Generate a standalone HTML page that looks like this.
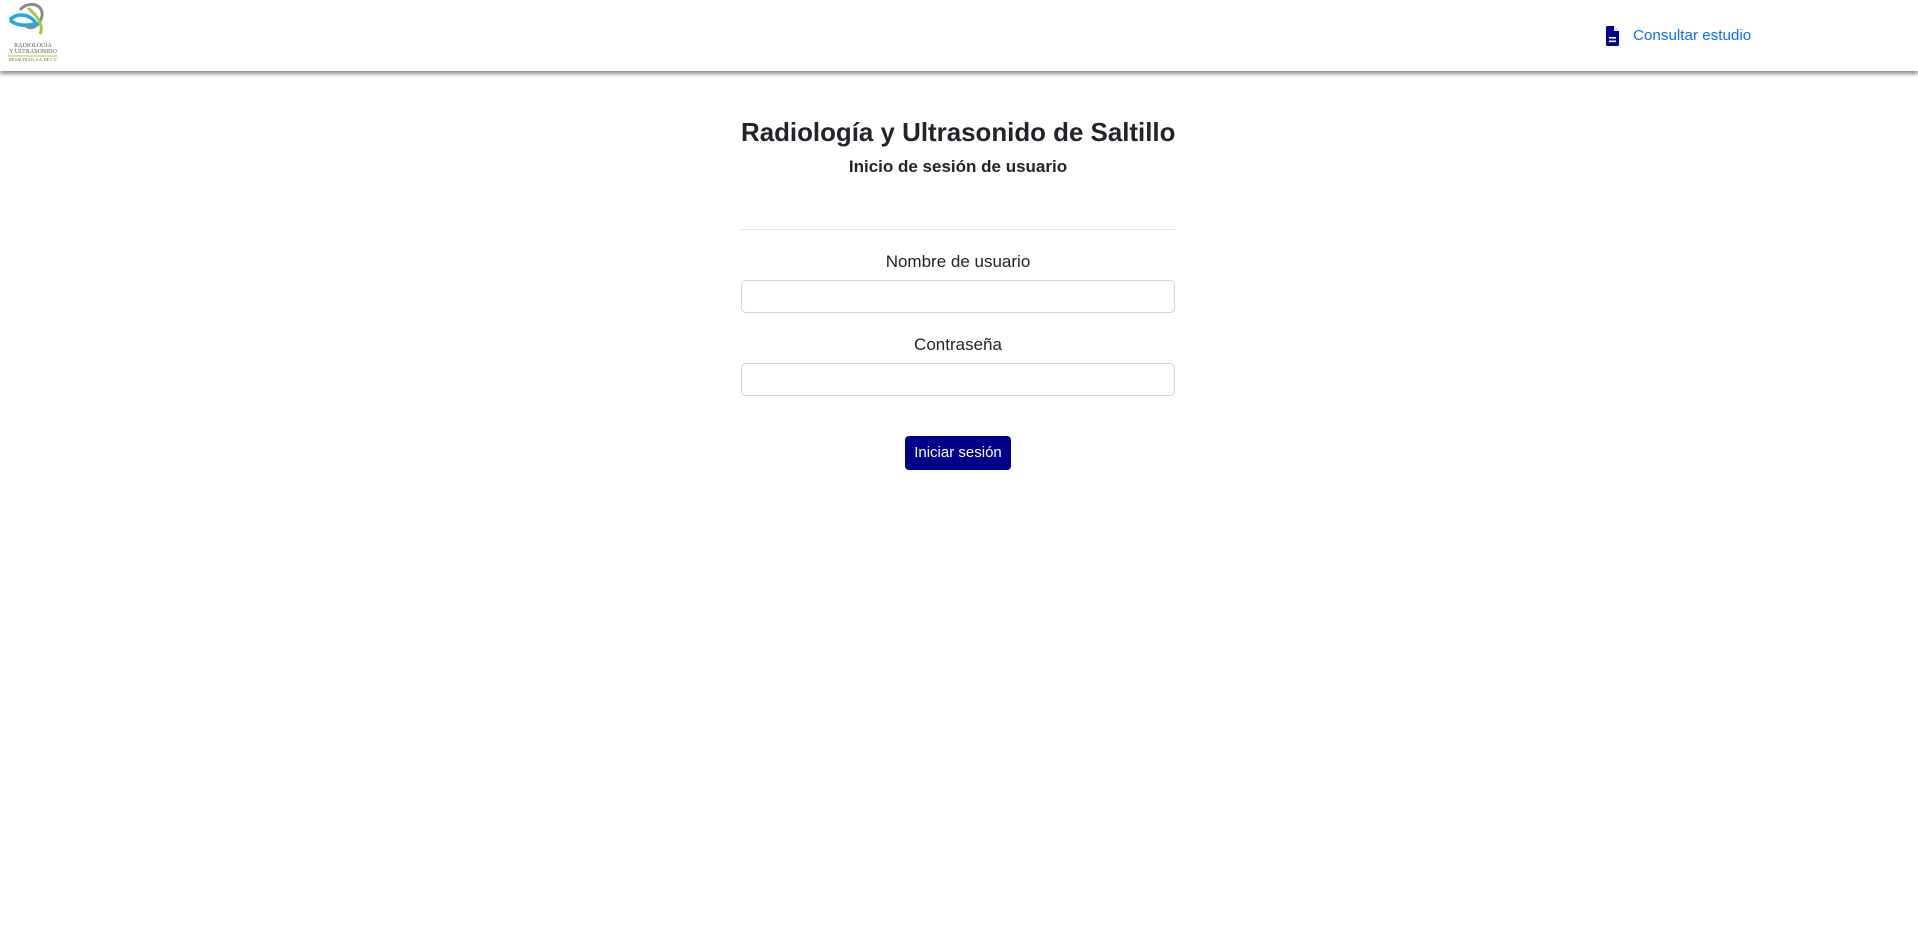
<!DOCTYPE html>
<html><head><meta charset="utf-8"><style>
body{margin:0;width:1918px;height:946px;background:#fff;font-family:"Liberation Sans",sans-serif;color:#212529;position:relative;overflow:hidden}
.nav{position:absolute;left:0;top:0;width:1918px;height:71px;background:#fff;box-shadow:0 3px 4px rgba(0,0,0,.45)}
.abs{position:absolute}
.c{position:absolute;left:741px;width:434px;text-align:center}
input{position:absolute;left:741px;width:434px;height:33px;box-sizing:border-box;border:1px solid #ced4da;border-radius:5px;margin:0}
</style></head><body>
<div class="nav">
<svg class="abs" style="left:6px;top:2px" width="54" height="62" viewBox="0 0 54 62">
<path d="M14 8 C22 -2 38 2 36 14 C34 24 24 30 18 22" fill="none" stroke="#8a8a8a" stroke-width="3"/>
<path d="M4 18 C10 10 26 12 30 22 C20 24 10 24 4 18" fill="none" stroke="#1fa9e0" stroke-width="3.5"/>
<path d="M22 6 C32 14 38 24 34 32" fill="none" stroke="#9ccc3c" stroke-width="3"/>
<text x="27" y="45" font-size="6" text-anchor="middle" fill="#555" font-family="Liberation Serif">RADIOLOGÍA</text>
<text x="27" y="51" font-size="6" text-anchor="middle" fill="#555" font-family="Liberation Serif">Y ULTRASONIDO</text>
<line x1="2" y1="54" x2="52" y2="54" stroke="#9ccc3c" stroke-width="1"/>
<text x="27" y="59" font-size="4" text-anchor="middle" fill="#555" font-family="Liberation Serif">DE SALTILLO, S.A. DE C.V.</text>
</svg>
<svg class="abs" style="left:1606px;top:26px" width="13" height="20" viewBox="0 0 13 20">
<path d="M1.5 0 H8 L13 5 V18.5 Q13 20 11.5 20 H1.5 Q0 20 0 18.5 V1.5 Q0 0 1.5 0Z" fill="#00008b"/>
<path d="M8 0 V5 H13" fill="#fff" opacity=".9"/>
<rect x="3" y="11" width="7" height="1.6" fill="#fff"/><rect x="3" y="14.5" width="7" height="1.6" fill="#fff"/>
</svg>
<div class="abs" style="left:1633px;top:27px;font-size:15.2px;color:#0d6efd">Consultar estudio</div>
</div>
<div class="c" style="top:119px;font-size:25.9px;font-weight:bold;white-space:nowrap">Radiología y Ultrasonido de Saltillo</div>
<div class="c" style="top:157px;font-size:17px;font-weight:bold">Inicio de sesión de usuario</div>
<div class="abs" style="left:741px;top:229px;width:434px;height:1px;background:#dee2e6"></div>
<div class="c" style="top:252px;font-size:17px">Nombre de usuario</div>
<input style="top:280px">
<div class="c" style="top:335px;font-size:17px">Contraseña</div>
<input style="top:363px">
<div class="abs" style="left:905px;top:436px;width:106px;height:34px;background:#00008b;border-radius:4px;color:#fff;font-size:15px;line-height:34px;text-align:center">Iniciar sesión</div>
</body></html>
